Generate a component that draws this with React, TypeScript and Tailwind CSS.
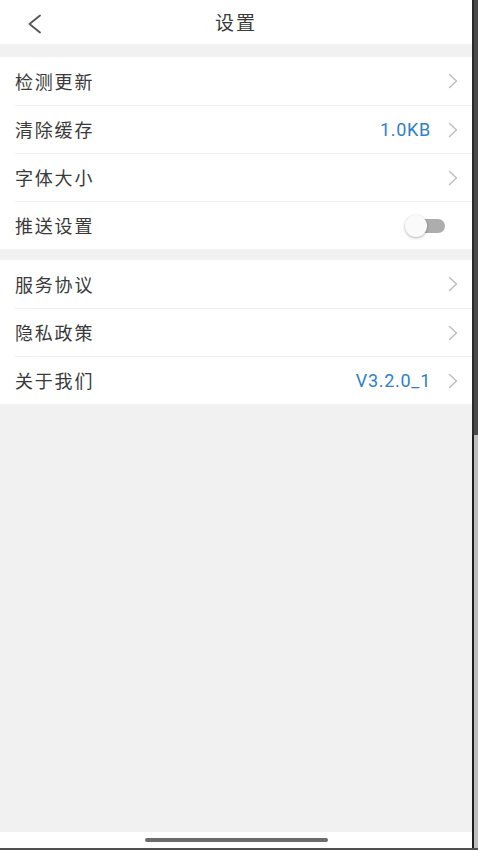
import React, { useState } from "react";

const font = { fontFamily: '"Noto Sans CJK SC", "Noto Sans", sans-serif' };

function Chevron() {
  return (
    <svg width="10" height="16" viewBox="0 0 10 16" fill="none" className="shrink-0">
      <path d="M1.5 1.5L8.5 8L1.5 14.5" stroke="#bdbdbd" strokeWidth="1.4" strokeLinecap="round" strokeLinejoin="round" />
    </svg>
  );
}

function Row({
  label,
  value,
  toggle,
  first,
  on,
  onToggle,
}: {
  label: string;
  value?: string;
  toggle?: boolean;
  first?: boolean;
  on?: boolean;
  onToggle?: () => void;
}) {
  return (
    <div className="bg-white pl-[15px]">
      <div
        className={`flex h-12 items-center pr-[14px] ${first ? "" : "border-t border-[#f0f0f0]"}`}
      >
        <span className="flex-1 text-[18px] tracking-[1.8px] text-[#3a3a3a]">{label}</span>
        {value && (
          <span className="mr-[17px] text-[18px] tracking-[0.7px] text-[#2f7fc9]" style={{ fontFamily: '"Roboto", "Noto Sans", sans-serif' }}>
            {value}
          </span>
        )}
        {toggle ? (
          <button onClick={onToggle} className="relative mr-[13px] h-[24px] w-[40px]">
            <span className={`absolute right-0 top-[5px] h-[14px] w-[28px] rounded-full ${on ? "bg-[#8fbde8]" : "bg-[#adadad]"}`} />
            <span
              className={`absolute top-[1px] h-[22px] w-[22px] rounded-full bg-[#fafafa] shadow-[0_1px_3px_rgba(0,0,0,0.3)] ${on ? "left-[18px]" : "left-0"}`}
            />
          </button>
        ) : (
          <Chevron />
        )}
      </div>
    </div>
  );
}

export default function App() {
  const [push, setPush] = useState(false);

  return (
    <div className="flex h-[850px] w-[478px] flex-col overflow-hidden" style={font}>
      <div className="flex flex-1 min-h-0">
        <div className="flex w-[472px] flex-col bg-[#f1f1f1]">
          {/* header */}
          <div className="relative flex h-[44px] items-center justify-center bg-white">
            <button className="absolute left-[27px] top-[14px]">
              <svg width="16" height="20" viewBox="0 0 16 20" fill="none">
                <path d="M13 1.5L2.5 10L13 18.5" stroke="#555" strokeWidth="1.8" strokeLinecap="round" strokeLinejoin="round" />
              </svg>
            </button>
            <span className="text-[19px] tracking-[2px] text-[#3a3a3a]">设置</span>
          </div>

          <div className="h-[13px]" />

          <div className="flex flex-col">
            <Row label="检测更新" first />
            <Row label="清除缓存" value="1.0KB" />
            <Row label="字体大小" />
            <Row label="推送设置" toggle on={push} onToggle={() => setPush(!push)} />
          </div>

          <div className="h-[11px]" />

          <div className="flex flex-col">
            <Row label="服务协议" first />
            <Row label="隐私政策" />
            <Row label="关于我们" value="V3.2.0_1" />
          </div>

          <div className="flex-1" />

          <div className="flex h-[16px] items-center bg-white pl-[145px]">
            <div className="h-[4px] w-[183px] rounded-full bg-[#6b6b6b]" />
          </div>
        </div>
        <div className="flex w-[6px] flex-col">
          <div className="h-[435px] border-l-2 border-[#2b2b2b] bg-[#4a4a4a]" />
          <div className="flex-1 border-l-2 border-[#1e1e1e] bg-[#bdbdbd]" />
        </div>
      </div>
      <div className="h-[2px] bg-[#4f4f4f]" />
    </div>
  );
}
